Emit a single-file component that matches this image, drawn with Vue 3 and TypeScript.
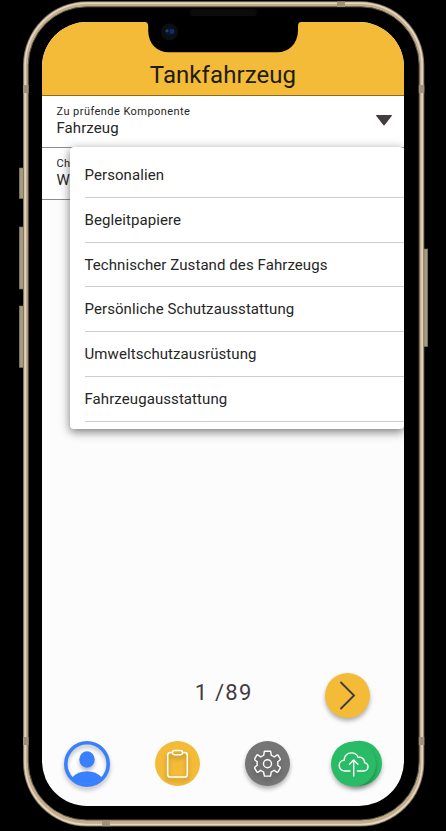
<script setup lang="ts">
import { ref } from 'vue'

const title = 'Tankfahrzeug'
const current = ref(1)
const total = 89
const options: string[] = [
  'Personalien',
  'Begleitpapiere',
  'Technischer Zustand des Fahrzeugs',
  'Persönliche Schutzausstattung',
  'Umweltschutzausrüstung',
  'Fahrzeugausstattung',
]
</script>

<template>
  <div class="stage">
    <svg class="device" viewBox="0 0 446 831" aria-hidden="true">
      <g fill="#a69a80" stroke="#7e7562" stroke-width=".6">
        <rect x="19.3" y="168" width="5" height="30.5" />
        <rect x="19.3" y="227" width="5" height="62" />
        <rect x="19.3" y="306" width="5" height="61.5" />
        <rect x="423" y="249" width="4.7" height="97.5" />
      </g>
      <rect x="23" y="1.2" width="401.3" height="825.4" rx="64" fill="#7c705d" />
      <rect x="23.9" y="2" width="399.5" height="823.8" rx="63" fill="#c3ae8c" />
      <rect x="25.2" y="3.3" width="396.9" height="821.2" rx="61.8" fill="none" stroke="#e3d6c6" stroke-width="1.5" />
      <rect x="28.2" y="6.8" width="391" height="813.2" rx="58.5" fill="#000" stroke="#675b49" stroke-width="1" />
      <g fill="#a19078">
        <rect x="23" y="85" width="5.5" height="8" />
        <rect x="418.8" y="85" width="5.5" height="8" />
        <rect x="23" y="737" width="5.5" height="8" />
        <rect x="418.8" y="737" width="5.5" height="8" />
        <rect x="337" y="1.5" width="8" height="5.5" />
        <rect x="102" y="820.5" width="8" height="5.8" />
      </g>
      <rect x="190" y="9" width="67" height="7" rx="3.5" fill="#0b0b0b" />
    </svg>

    <main class="screen">
      <header class="header">
        <h1>{{ title }}</h1>
      </header>

      <section class="field">
        <div class="field-text">
          <span class="label">Zu prüfende Komponente</span>
          <span class="value">Fahrzeug</span>
        </div>
        <svg class="caret" viewBox="0 0 16 11"><path d="M.5 0h15q.7.3.2 1L8.7 10q-.7.8-1.4 0L.3 1Q-.2.3.5 0Z" fill="#423b40" /></svg>
      </section>

      <section class="field">
        <div class="field-text">
          <span class="label">Ch</span>
          <span class="value">W</span>
        </div>
        <ul class="menu">
          <li v-for="option in options" :key="option">{{ option }}</li>
        </ul>
      </section>

      <div class="pager">
        <span class="count">{{ current }} /{{ total }}</span>
        <button class="round next" aria-label="Weiter">
          <svg viewBox="0 0 45 45"><path d="M16 9.5 29 22.5 16 35.5" fill="none" stroke="#423b40" stroke-width="1.9" stroke-linecap="round" /></svg>
        </button>
      </div>

      <nav class="nav">
        <button class="round profile" aria-label="Profil">
          <svg viewBox="0 0 46 46">
            <circle cx="23" cy="23" r="21" fill="#fff" />
            <circle class="head" cx="23" cy="23" r="21.2" fill="none" stroke="#3980ff" stroke-width="3.6" />
            <ellipse class="head" cx="23" cy="18.5" rx="7.7" ry="8.2" fill="#3980ff" />
            <path d="M8 36.5Q14 30.2 23 30.2T38 36.5A20.5 20.5 0 0 1 8 36.5Z" fill="#3980ff" />
          </svg>
        </button>
        <button class="round list" aria-label="Checkliste">
          <svg viewBox="0 0 45 45">
            <g class="glyph" fill="none" stroke="#fff" stroke-width="1.5">
              <path d="M17.5 11.5h-2.2q-2.6 0-2.6 2.6v19.4q0 2.6 2.6 2.6h14.4q2.6 0 2.6-2.6V14.1q0-2.6-2.6-2.6h-2.2" />
              <rect x="17.5" y="9.4" width="10" height="4.4" rx="1.7" />
            </g>
          </svg>
        </button>
        <button class="round settings" aria-label="Einstellungen">
          <svg viewBox="0 0 45 45">
            <g class="glyph" fill="none" stroke="#fff" stroke-width="1.4" stroke-linejoin="round">
              <path d="M19.4 10.2h6.2l.7 4.2q1.7.5 2.9 1.6l3.1-2.1q.5-.2.8.3l2 3.5q.5 1-.3 1.5l-2.1 1.5q.4 1.8 0 3.6l2.1 1.6q.8.6.3 1.4l-2.1 3.5q-.5.7-1.2.3l-2.6-1.8q-1.4 1.2-3 1.7l-.7 4.1h-6.1l-.8-4.1q-1.6-.5-2.9-1.7l-2.7 1.8q-.7.4-1.2-.3l-2-3.5q-.5-.8.3-1.4l2.2-1.6q-.5-1.8 0-3.6l-2.3-1.6q-.6-.6-.2-1.4l2-3.5q.4-.6 1-.3l3 2.1q1.3-1.1 2.9-1.6z" />
              <circle cx="22.5" cy="22.7" r="4" />
            </g>
          </svg>
        </button>
        <button class="upload" aria-label="Hochladen">
          <svg viewBox="0 0 51 46">
            <circle class="drop" cx="28.5" cy="22.3" r="22.5" fill="#29bb65" />
            <circle class="drop" cx="22.5" cy="23" r="22.5" fill="#29bb65" />
            <path d="M19 30h-5c-3.2 0-5.8-2.4-5.8-5.5 0-2.9 2.2-5.2 5-5.3-.2-4.1 3-7.3 7.2-7.3 3.2 0 5.700 1.700 6.800 4.500 3.600-.8 6.600 1.800 6.300 5.200 2.100.4 3.500 2.100 3.500 4.200 0 2.400-1.900 4.200-4.300 4.200H26.500M22.700 35V19.300M18.500 23.300l4.200-4.200 4.200 4.200" fill="none" stroke="#fff" stroke-width="1.4" stroke-linejoin="round" stroke-linecap="round" />
          </svg>
        </button>
      </nav>

      <svg class="notch" viewBox="0 0 156 31" aria-hidden="true">
        <path d="M0 0H156Q153.2.2 153 4V9C152.5 22 144 30.3 132 30.3H24C12 30.3 3.5 22 3.2 9V4Q3 .2 0 0Z" fill="#000" />
        <circle cx="24.5" cy="10" r="8.5" fill="#0b0e12" />
        <circle cx="24.5" cy="9.5" r="4.3" fill="#081527" />
        <circle cx="27" cy="9.5" r="2.4" fill="#142d70" />
        <circle cx="22" cy="8.8" r="1.6" fill="#1b4b50" />
      </svg>
    </main>
  </div>
</template>

<style>
body {
  background: #000;
}
</style>

<style scoped>
.stage {
  position: relative;
  box-sizing: border-box;
  width: 446px;
  height: 831px;
  padding: 22px 42px 25px;
  overflow: hidden;
  background: #000;
  font-family: Roboto, sans-serif;
  color: #262626;
}
.device {
  position: absolute;
  inset: 0;
  width: 446px;
  height: 831px;
}
.screen {
  position: relative;
  display: flex;
  flex-direction: column;
  width: 362px;
  height: 784px;
  border-radius: 45px;
  overflow: hidden;
  background: #fcfcfc;
}
.header {
  box-sizing: border-box;
  flex: none;
  height: 74px;
  padding-top: 38px;
  border-bottom: 1px solid #8a6a20;
  background: #f4bb39;
  text-align: center;
}
h1 {
  margin: 0;
  font-size: 24px;
  line-height: 30px;
  font-weight: 400;
  letter-spacing: 0.08px;
  color: #211c0f;
}
.field {
  position: relative;
  box-sizing: border-box;
  display: flex;
  flex: none;
  justify-content: space-between;
  height: 52px;
  padding: 8px 12px 0 14.5px;
  border-bottom: 1px solid #8d8d8d;
  background: #fff;
}
.field-text {
  display: flex;
  flex-direction: column;
}
.label {
  font-size: 11px;
  line-height: 15px;
  letter-spacing: 0.44px;
}
.value {
  font-size: 15px;
  line-height: 19px;
  letter-spacing: 0.08px;
}
.caret {
  width: 16px;
  height: 11px;
  margin-top: 11px;
}
.menu {
  position: absolute;
  z-index: 1;
  top: -1.5px;
  left: 28px;
  right: 0;
  box-sizing: border-box;
  height: 282.5px;
  margin: 0;
  padding: 6.5px 0 0 14.5px;
  list-style: none;
  border-radius: 4px;
  background: #fff;
  box-shadow: 0 3px 8px rgba(0, 0, 0, 0.42), 0 2px 14px rgba(0, 0, 0, 0.15);
}
.menu li {
  box-sizing: border-box;
  height: 44.75px;
  border-bottom: 1px solid #cdcdcd;
  font-size: 15px;
  line-height: 45px;
  letter-spacing: 0.08px;
}
.pager {
  display: flex;
  align-items: center;
  justify-content: flex-end;
  gap: 72.5px;
  margin-top: auto;
  padding-right: 34px;
}
.count {
  font-size: 22px;
  line-height: 26px;
  letter-spacing: 1.2px;
  color: #423b40;
  padding-bottom: 3.5px;
}
button {
  display: block;
  padding: 0;
  border: 0;
  background: none;
}
button svg {
  display: block;
  width: 100%;
  height: 100%;
  overflow: visible;
}
.round {
  width: 45px;
  height: 45px;
  border-radius: 50%;
}
.next,
.settings {
  box-shadow: 0 3px 4px rgba(0, 0, 0, 0.3);
}
.next,
.list {
  background: #f4bb39;
}
.settings {
  background: #757575;
}
.profile {
  width: 46px;
  height: 46px;
}
.nav {
  display: grid;
  grid-template-columns: 91px 90px 86px 51px;
  align-items: center;
  padding: 23px 22px 19.5px;
}
.upload {
  width: 51px;
  height: 46px;
}
.head,
.glyph,
.drop {
  filter: drop-shadow(0 3px 2px rgba(0, 0, 0, 0.28));
}
.notch {
  position: absolute;
  top: 0;
  left: 103px;
  width: 156px;
  height: 31px;
}
</style>
